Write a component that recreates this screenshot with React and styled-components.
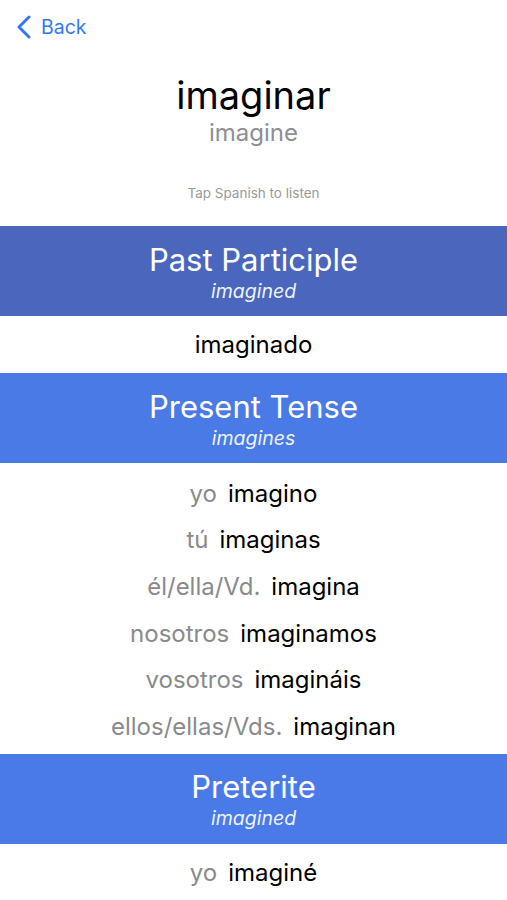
import React from "react";
import styled, { createGlobalStyle } from "styled-components";

const Global = createGlobalStyle`
  html, body {
    margin: 0;
    padding: 0;
    background: #ffffff;
    font-family: Inter, "Noto Sans", "Liberation Sans", sans-serif;
    -webkit-font-smoothing: antialiased;
  }
`;

const sections = [
  {
    title: "Past Participle",
    english: "imagined",
    tone: "#4a67bd",
    rows: [{ verb: "imaginado" }],
  },
  {
    title: "Present Tense",
    english: "imagines",
    tone: "#4a7ae6",
    rows: [
      { who: "yo", verb: "imagino" },
      { who: "tú", verb: "imaginas" },
      { who: "él/ella/Vd.", verb: "imagina" },
      { who: "nosotros", verb: "imaginamos" },
      { who: "vosotros", verb: "imagináis" },
      { who: "ellos/ellas/Vds.", verb: "imaginan" },
    ],
  },
  {
    title: "Preterite",
    english: "imagined",
    tone: "#4a7ae8",
    rows: [{ who: "yo", verb: "imaginé" }],
  },
];

const App = () => {
  return (
    <Screen>
      <Global />
      <NavBar>
        <BackButton>
          <svg width="16" height="24" viewBox="0 0 16 24">
            <polyline
              points="13,2 3,12 13,22"
              fill="none"
              stroke="#3478f6"
              strokeWidth="3"
              strokeLinecap="round"
              strokeLinejoin="round"
            />
          </svg>
          <span>Back</span>
        </BackButton>
      </NavBar>
      <Hero>
        <Word>imaginar</Word>
        <Meaning>imagine</Meaning>
        <Hint>Tap Spanish to listen</Hint>
      </Hero>
      {sections.map((s) => (
        <section key={s.title}>
          <Band $tone={s.tone}>
            <BandTitle>{s.title}</BandTitle>
            <BandSub>{s.english}</BandSub>
          </Band>
          <Rows $single={s.rows.length === 1}>
            {s.rows.map((r) => (
              <Row key={r.verb} $single={s.rows.length === 1}>
                {r.who && <Pronoun>{r.who}</Pronoun>}
                <Verb>{r.verb}</Verb>
              </Row>
            ))}
          </Rows>
        </section>
      ))}
    </Screen>
  );
};

export default App;

const Screen = styled.div`
  width: 100%;
  min-height: 900px;
  background: #fff;
  overflow: hidden;
`;

const NavBar = styled.div`
  height: 54px;
  display: flex;
  align-items: center;
  padding-left: 16px;
`;

const BackButton = styled.div`
  display: flex;
  align-items: center;
  gap: 9px;
  color: #3478f6;
  font-size: 19.5px;
  line-height: 24px;
`;

const Hero = styled.div`
  display: flex;
  flex-direction: column;
  align-items: center;
  padding-top: 18px;
  padding-bottom: 25px;
`;

const Word = styled.div`
  font-size: 38px;
  line-height: 46px;
  color: #000;
`;

const Meaning = styled.div`
  font-size: 24px;
  line-height: 30px;
  color: #8e8e93;
`;

const Hint = styled.div`
  margin-top: 37px;
  font-size: 13.5px;
  line-height: 16px;
  color: #9a9a9a;
`;

const Band = styled.div`
  height: 90px;
  background: ${(p) => p.$tone};
  display: flex;
  flex-direction: column;
  align-items: center;
  justify-content: center;
  color: #fff;
  padding-top: 2px;
  box-sizing: border-box;
`;

const BandTitle = styled.div`
  font-size: 31px;
  line-height: 37px;
`;

const BandSub = styled.div`
  font-size: 19.5px;
  line-height: 26px;
  font-style: italic;
  color: #eef2ff;
`;

const Rows = styled.div`
  display: flex;
  flex-direction: column;
  padding: ${(p) => (p.$single ? "0" : "7px 0 4px")};
`;

const Row = styled.div`
  height: ${(p) => (p.$single ? "57px" : "46.6px")};
  display: flex;
  align-items: center;
  justify-content: center;
  gap: 11px;
  font-size: 24px;
`;

const Pronoun = styled.span`
  color: #8a8a8e;
`;

const Verb = styled.span`
  color: #000;
`;
